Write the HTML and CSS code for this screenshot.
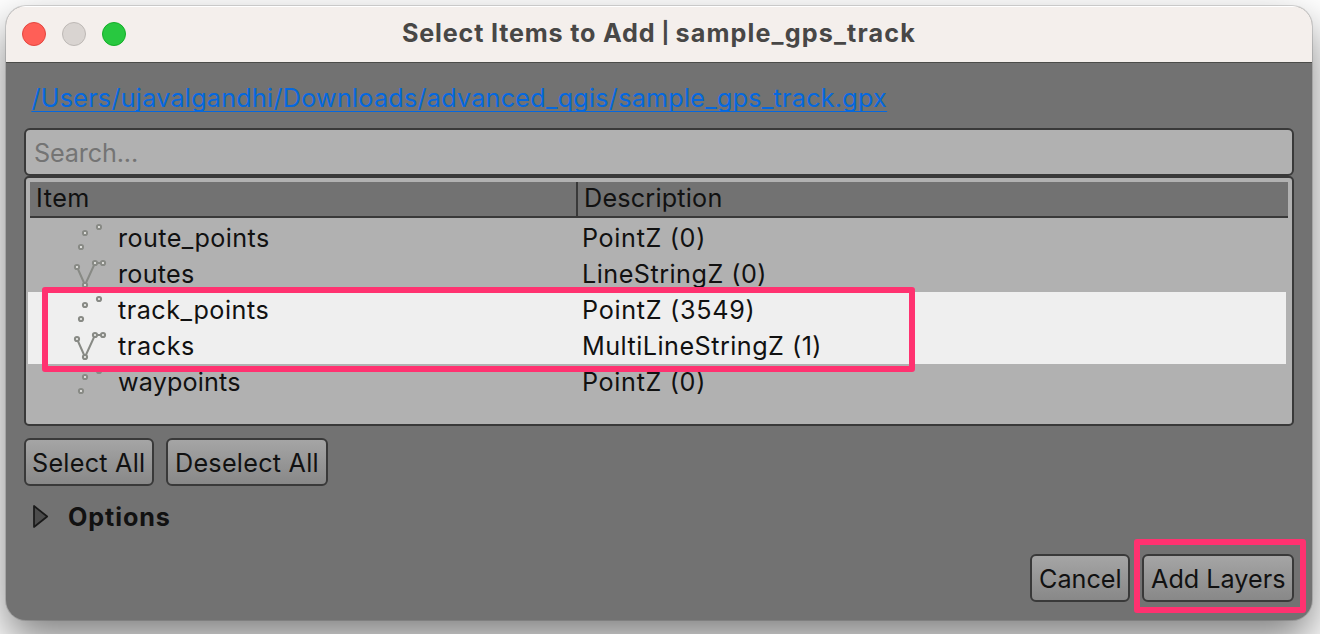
FILE: index.html
```
<!DOCTYPE html>
<html lang="en">
<head>
<meta charset="utf-8">
<title>Select Items to Add</title>
<link rel="stylesheet" href="styles.css">
</head>
<body>
<svg class="defs" width="0" height="0" aria-hidden="true">
  <symbol id="points" viewBox="0 0 36 36">
    <circle cx="13" cy="13" r="2.1"/><circle cx="27" cy="7" r="2.1"/><circle cx="9" cy="27" r="2.1"/>
  </symbol>
  <symbol id="line" viewBox="0 0 36 36">
    <path d="M5 11 13 29 23 7H31" fill="none"/>
    <circle cx="5" cy="11" r="2.1"/><circle cx="13" cy="29" r="2.1"/><circle cx="23" cy="7" r="2.1"/><circle cx="31" cy="7" r="2.1"/>
  </symbol>
</svg>
<main class="window">
  <header class="titlebar">
    <div class="lights"><i class="light red"></i><i class="light gray"></i><i class="light green"></i></div>
    <h1 class="title"><span class="t-title">Select Items to Add</span><span class="pipe"> | </span><span class="t-file">sample_gps_track</span></h1>
  </header>
  <section class="content">
    <a class="path"><span class="t-path">/Users/ujavalgandhi/Downloads/advanced_qgis/sample_gps_track.gpx</span></a>
    <div class="search"><span class="t-search">Search...</span></div>
    <div class="tree">
      <div class="head"><div class="col-item"><span class="t-item">Item</span></div><div class="col-desc"><span class="t-desc">Description</span></div></div>
      <div class="rows">
        <div class="row"><svg class="icon"><use href="#points"/></svg><span class="name"><span class="t-rp">route_points</span></span><span class="t-pz">PointZ (0)</span></div>
        <div class="row"><svg class="icon"><use href="#line"/></svg><span class="name"><span class="t-routes">routes</span></span><span class="t-ls">LineStringZ (0)</span></div>
        <div class="row selected"><svg class="icon"><use href="#points"/></svg><span class="name"><span class="t-tp">track_points</span></span><span class="t-pz2">PointZ (3549)</span></div>
        <div class="row selected"><svg class="icon"><use href="#line"/></svg><span class="name"><span class="t-tracks">tracks</span></span><span class="t-mls">MultiLineStringZ (1)</span></div>
        <div class="row"><svg class="icon"><use href="#points"/></svg><span class="name"><span class="t-wp">waypoints</span></span><span class="t-pz">PointZ (0)</span></div>
      </div>
      <div class="mark mark-rows"></div>
    </div>
    <div class="buttons">
      <button class="btn select"><span class="t-sel">Select All</span></button>
      <button class="btn deselect"><span class="t-desel">Deselect All</span></button>
    </div>
    <div class="options">
      <svg class="arrow" width="18" height="26" viewBox="0 0 18 26"><path d="M2 2V23L15.200 12.500Z"/></svg>
      <span class="t-opt">Options</span>
    </div>
    <footer class="footer">
      <button class="btn cancel"><span class="t-cancel">Cancel</span></button>
      <button class="btn add"><span class="t-add">Add Layers</span><span class="mark mark-add"></span></button>
    </footer>
  </section>
</main>
</body>
</html>
```
FILE: styles.css
```
* { box-sizing: border-box; }
html, body { height: 100%; }
body {
  margin: 0;
  padding: 6px 8px 14px 6px;
  overflow: hidden;
  background: #fff;
  font-family: Inter, "Liberation Sans", sans-serif;
  font-size: 25.2px;
  color: #111;
  white-space: nowrap;
}
.defs { position: absolute; }
.window {
  height: 614px;
  display: flex;
  flex-direction: column;
  border-radius: 20px;
  overflow: hidden;
  background: #727272;
  box-shadow: 0 0 0 1px rgba(0,0,0,.14), 0 20px 44px rgba(0,0,0,.5);
}
.titlebar {
  height: 57px;
  flex: none;
  display: grid;
  grid-template-columns: 396px 1fr;
  align-items: center;
  background: #f4efec;
  border-bottom: 1px solid #4b4c49;
  box-shadow: inset 0 1px #fff;
}
.lights { display: flex; gap: 16px; padding-left: 16px; }
.light { width: 24px; height: 24px; border-radius: 50%; border: 1px solid; }
.red { background: #ff5f57; border-color: #e2463f; }
.gray { background: #d9d4d1; border-color: #bdb8b5; }
.green { background: #28c840; border-color: #14ae28; }
.title { display: flex; align-items: center; margin: 0; font-size: 25.2px; line-height: 54px; font-weight: 700; color: #484746; padding-bottom: 2px; }
.pipe { width: 20px; text-align: center; white-space: pre; font-size: 21px; }
.content { flex: 1; padding: 15px 18px 0; display: flex; flex-direction: column; }
.path {
  height: 50px;
  padding-left: 7.4px;
  line-height: 40px;
  color: #0568df;
  text-decoration: underline;
  text-decoration-thickness: 1px;
  text-underline-offset: 4px;
  text-decoration-skip-ink: none;
}
.search {
  height: 48px;
  line-height: 46px;
  padding-left: 8px;
  border: 2px solid #393939;
  border-radius: 6px;
  background: #b1b1b1;
  color: #747474;
}
.tree {
  position: relative;
  height: 250px;
  padding: 4px 4px 0 2px;
  border: 2px solid #393939;
  border-radius: 5px;
  background: #b1b1b1;
}
.head {
  display: grid;
  grid-template-columns: 548px 1fr;
  height: 36px;
  margin-left: 2px;
  line-height: 32px;
  background: #727272;
  border-bottom: 2px solid #393939;
}
.col-item { padding-left: 6px; border-right: 2px solid #393939; }
.col-desc { padding-left: 6px; }
.rows { padding-top: 2px; margin-right: 2px; }
.row {
  display: grid;
  grid-template-columns: 46px 464px 1fr;
  height: 36px;
  line-height: 36px;
  padding-left: 44px;
}
.selected { background: #efefef; }
.icon { width: 36px; height: 36px; fill: #eeeeec; stroke: #888a85; stroke-width: 2; }
.mark { position: absolute; border: 6px solid #ff3270; border-radius: 3px; pointer-events: none; }
.mark-rows { left: 16px; top: 109px; width: 873px; height: 85px; }
.buttons { display: flex; gap: 12px; margin-top: 12px; }
.btn {
  position: relative;
  height: 48px;
  padding: 0 0 0 6px;
  border: 2px solid #393939;
  border-radius: 6px;
  background: linear-gradient(#a5a5a5, #888);
  font: inherit;
  line-height: 46px;
  color: #111;
  text-align: left;
}
.select { width: 130px; }
.deselect { width: 162px; padding-left: 7px; }
.cancel { width: 100px; padding-left: 7px; }
.add { width: 152px; padding-left: 7px; }
.mark-add { left: -10px; top: -17px; width: 172px; height: 74px; }
.options { display: flex; align-items: center; height: 40px; margin-top: 11px; padding-left: 8px; gap: 18px; font-weight: 700; }
.arrow { fill: #4c4c4c; stroke: #191919; stroke-width: 1.7; stroke-linejoin: round; }
.footer { display: flex; justify-content: flex-end; gap: 12px; margin-top: 17px; }

/* Per-label tracking */
.t-title { letter-spacing: .8px; }
.t-file { letter-spacing: 1.13px; }
.t-path { letter-spacing: .235px; }
.t-search { letter-spacing: -.15px; }
.t-item { letter-spacing: .5px; }
.t-desc { letter-spacing: .2px; }
.t-rp { letter-spacing: .4px; }
.t-routes { letter-spacing: .25px; }
.t-tp { letter-spacing: .5px; }
.t-tracks { letter-spacing: .6px; }
.t-wp { letter-spacing: .15px; }
.t-pz { letter-spacing: .65px; }
.t-ls { letter-spacing: .48px; }
.t-pz2 { letter-spacing: .7px; }
.t-mls { letter-spacing: .47px; }
.t-sel { letter-spacing: .25px; }
.t-desel { letter-spacing: .25px; }
.t-opt { letter-spacing: .9px; }
```
